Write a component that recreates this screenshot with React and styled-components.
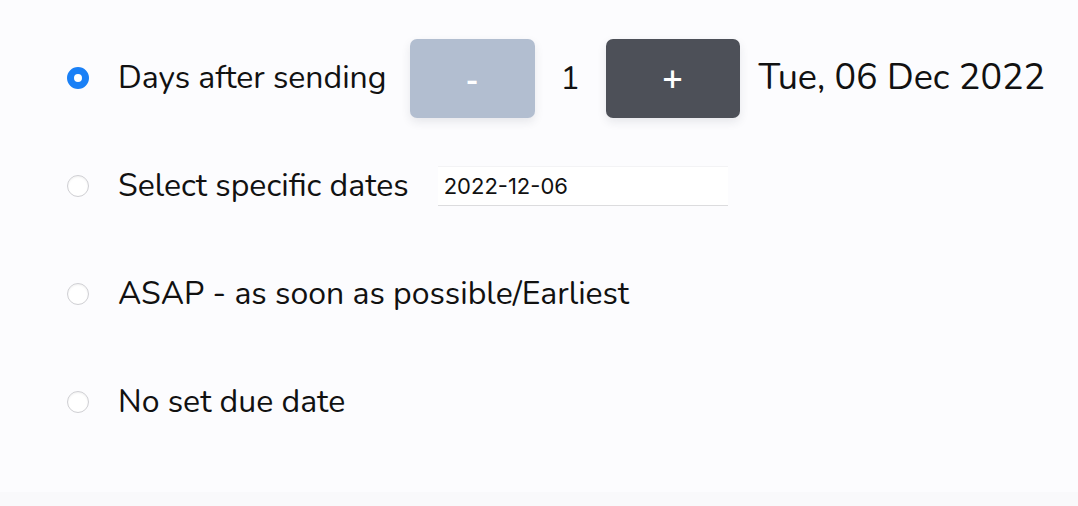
import styled, { createGlobalStyle } from "styled-components";

const GlobalStyle = createGlobalStyle`
  html, body {
    margin: 0;
    padding: 0;
    background-color: #fcfcfe;
  }
  body {
    font-family: "Nunito", "Noto Sans", sans-serif;
    color: #111;
  }
`;

const Page = styled.div`
  min-height: 506px;
  display: flex;
  flex-direction: column;
`;

const Options = styled.div`
  display: flex;
  flex-direction: column;
  padding: 24px 0 0 67px;
  height: 492px;
  box-sizing: border-box;
`;

const Footer = styled.div`
  height: 14px;
  background-color: #f9f9fb;
`;

const Row = styled.label`
  display: flex;
  align-items: center;
  height: 108px;
`;

const Radio = styled.span`
  box-sizing: border-box;
  width: 22px;
  height: 22px;
  border-radius: 50%;
  flex-shrink: 0;
  margin-right: 29px;
  background-color: #ffffff;
  border: ${(p) => (p.$checked ? "7px solid #1a80f6" : "1px solid #cfcfd3")};
  box-shadow: ${(p) => (p.$checked ? "none" : "inset 0 1px 2px rgba(0,0,0,0.06)")};
`;

const Label = styled.span`
  font-size: 32px;
  line-height: 1;
  white-space: nowrap;
`;

const StepButton = styled.button`
  width: ${(p) => p.$width}px;
  height: 79px;
  border: none;
  border-radius: 7px;
  background-color: ${(p) => (p.$dark ? "#4d5058" : "#b2bed0")};
  color: #ffffff;
  font-family: "Noto Sans", sans-serif;
  font-size: 36px;
  font-weight: 500;
  display: flex;
  align-items: center;
  justify-content: center;
  box-shadow: 0 4px 10px rgba(40, 50, 70, 0.1);
  padding: 0;
  margin-left: ${(p) => p.$ml || 0}px;
`;

const Count = styled.span`
  font-size: 32px;
  width: 71px;
  text-align: center;
`;

const DateText = styled(Label)`
  margin-left: 19px;
  font-size: 36px;
`;

const DateInput = styled.input`
  margin-left: 29px;
  width: 290px;
  height: 40px;
  box-sizing: border-box;
  border: none;
  border-top: 1px solid #f3f3f5;
  border-bottom: 1px solid #dcdcde;
  background-color: #ffffff;
  font-family: "Inter", "Roboto", sans-serif;
  font-size: 22px;
  color: #111;
  padding: 0 6px;
  outline: none;
`;

export default function App() {
  return (
    <Page>
      <GlobalStyle />
      <Options>
        <Row>
          <Radio $checked />
          <Label>Days after sending</Label>
          <StepButton $width={125} $ml={23}>-</StepButton>
          <Count>1</Count>
          <StepButton $width={134} $dark>+</StepButton>
          <DateText>Tue, 06 Dec 2022</DateText>
        </Row>
        <Row>
          <Radio />
          <Label>Select specific dates</Label>
          <DateInput type="text" defaultValue="2022-12-06" />
        </Row>
        <Row>
          <Radio />
          <Label>ASAP - as soon as possible/Earliest</Label>
        </Row>
        <Row>
          <Radio />
          <Label>No set due date</Label>
        </Row>
      </Options>
      <Footer />
    </Page>
  );
}
